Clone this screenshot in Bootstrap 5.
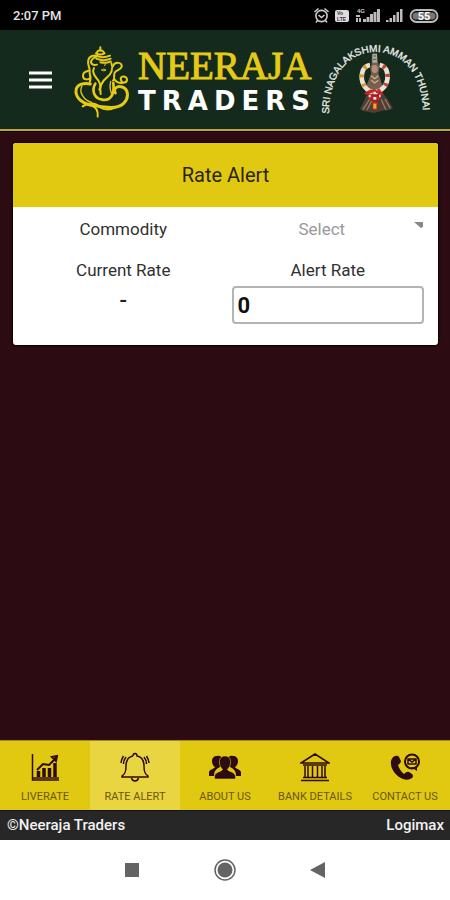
<!DOCTYPE html>
<html lang="en">
<head>
<meta charset="utf-8">
<meta name="viewport" content="width=device-width, initial-scale=1">
<title>Neeraja Traders - Rate Alert</title>
<link rel="stylesheet" href="https://cdn.jsdelivr.net/npm/bootstrap@5.3.0/dist/css/bootstrap.min.css">
<style>
body{font-family:Roboto,"Liberation Sans",sans-serif;background:#2d0b12;color:#222}
svg{display:block;flex:none}
.status-bar{height:30px;background:#000;color:#e4e4e4;font-size:13px;font-weight:500;padding:2px 11px 0 13px}
.app-header{height:101px;background:#142a1d;border-bottom:2px solid #c3a436;padding:0 17px 0 28px;box-shadow:0 1px 0 #090304;margin-bottom:12px}
.menu-btn{color:#fff;line-height:1}
.brand{gap:8px;margin-left:20px;padding-top:4px}
.brand-name{font-family:"Liberation Serif",serif;font-size:39px;line-height:38px;color:#e5ca16;-webkit-text-stroke:1px #e5ca16}
.brand-sub{font-family:"DejaVu Sans","Liberation Sans",sans-serif;font-weight:700;font-size:26px;line-height:32px;letter-spacing:6px;margin-right:-6px;color:#fff}
.crest{margin-left:auto}
.rate-card{margin:0 12px 0 13px;border:0;border-radius:3px;box-shadow:0 0 2px 1px #0c0204}
.rate-card .card-header{background:#e1c911;border:0;height:64px;font-size:20px;color:#29250c;border-radius:3px 3px 0 0}
.rate-card .card-body{padding:0 14px 21px}
.fields{column-gap:12px}
.fields>*{flex:1 1 0;min-width:0}
.field-label{font-size:17px;line-height:24px;color:#303030}
.row-first{height:43px}
.commodity{font-size:17px;line-height:24px;color:#999;appearance:none;background:none;border:0;padding:0;text-align:center;text-align-last:center;flex:1;min-width:0}
.rate-input{height:38px;border:2px solid #b4b4b4;border-radius:4px;padding:0 4px;font-size:22px;font-weight:700;color:#111}
.rate-value{font-size:22px;line-height:30px;font-weight:500}
.tabs{background:#e1c911;border-top:1px solid #a08b1c}
.tab{flex:1 1 0;min-width:0;height:69px;padding-top:11px;color:#6b5610;font-size:11px;line-height:16px;gap:7px;white-space:nowrap}
.tab svg{color:#2d0b12}
.tab.active{background:#e9d53f}
.copyright{height:30px;background:#272727;border-top:1px solid #111;color:#f2f2f2;font-size:15px;font-weight:500;padding:0 6px 0 7px}
.sys-nav{height:60px;background:#fff;gap:72px}
</style>
</head>
<body class="d-flex flex-column min-vh-100">
<div class="status-bar d-flex align-items-center justify-content-between">
  <span>2:07 PM</span>
  <svg width="126" height="18" viewBox="313 7 126 18" role="img" aria-label="Alarm, VoLTE, 4G signal, battery 55">
    <g fill="none" stroke="#ccc" stroke-width="1.6"><circle cx="321.500" cy="16" r="5.600"/><path d="M314.500 12l4-3.500M328.500 12l-4-3.500M318.500 15l3 2.500 3-2.500M317.500 20.500l-1.500 2M325.500 20.500l1.500 2"/></g>
    <rect x="335" y="10" width="14" height="12" rx="2" fill="#ddd"/>
    <g fill="#333" font-family="Liberation Sans,sans-serif" font-weight="700" font-size="5"><text x="337" y="15">Vo</text><text x="337" y="20.500">LTE</text></g>
    <text x="357" y="13" fill="#ccc" font-family="Liberation Sans,sans-serif" font-weight="700" font-size="6">4G</text>
    <path fill="#bbb" d="M356 15h4v2h-4zM356 18h2v4h-2zM359 18h2v4h-2zM363 19h3v3h-3zM366.500 17h3v5h-3zM370 14h3v8h-3zM373.500 12h3v10h-3zM377 9h3v13h-3zM386 20h2.500v2H386zM389.500 18h2.500v4h-2.500zM393 15h2.500v7H393zM396.500 12h2.500v10h-2.500zM400 9h2.500v13H400z"/>
    <rect x="410.500" y="10" width="27" height="12" rx="6" fill="#111" stroke="#bbb" stroke-width="1.800"/>
    <path fill="#777" d="M416 12.500h16a3.500 3.500 0 0 1 0 7h-16a3.500 3.500 0 0 1 0-7z"/>
    <text x="424" y="20" text-anchor="middle" fill="#fff" font-family="Roboto,sans-serif" font-weight="700" font-size="11">55</text>
  </svg>
</div>

<header class="app-header d-flex align-items-center">
  <button class="menu-btn btn p-0 border-0" type="button" aria-label="Menu">
    <svg width="26" height="20" viewBox="0 0 26 20" stroke="currentColor" stroke-width="3"><path d="M1 3h23M1 10h23M1 17h23"/></svg>
  </button>
  <div class="brand d-flex align-items-center">
    <svg width="56" height="72" viewBox="221 50 168 216" fill="none" stroke="#e5ca16" stroke-width="6" stroke-linecap="round" stroke-linejoin="round" aria-hidden="true">
      <path d="M300 54v10M292 66q8-7 16 0l5 6q-14 7-26 0z"/>
      <path d="M287 79q20 9 42 0M288 88q22 9 43 0M300 99q17 4 31-3"/>
      <path d="M290 106c-12 4-21-4-17-12 5-11 16-10 18-14-8-4-24 0-27 12-4 15 4 19 4 31-5 2-21 2-20 17 0 14 20 12 23 3M268 123c-2 13 7 24 0 35"/>
      <path d="M281 116c-9 16 7 29 14 39 7 12 5 20 2 26M333 101c7 18-1 34-13 43-16 12-24 27-19 50"/>
      <path d="M304 122q7-6 13 0-6 6-13 0M313 109l3-7" stroke-width="3"/>
      <path d="M338 111c5-15 29-13 26 1-2 9-16 9-21 18-4 8 2 16-5 24M343 151c9 13 24 11 35 7M362 152c-6-12 17-15 18-2 1 10-16 14-18 2"/>
      <path d="M270 164c-20-4-42 1-43 20-2 25 26 43 57 45 25 4 66 13 86-7 17-17 14-43-4-49-18-5-28 7-21 18" stroke-width="9"/>
      <path d="M245 170c-11 18 7 45 29 49M331 156c-3 12-4 26 6 43" stroke-width="4"/>
      <path d="M285 163c-12 21-4 43 20 48 26 5 38-15 34-50" stroke-width="8"/>
      <path d="M272 227c12 8 22 10 20 35M247 231c16-12 39-12 50 2 16 10 34 8 48 2"/>
    </svg>
    <div class="d-flex flex-column">
      <span class="brand-name">NEERAJA</span>
      <span class="brand-sub">TRADERS</span>
    </div>
  </div>
  <svg class="crest" width="114" height="76" viewBox="319 41 114 76" role="img" aria-label="Sri Nagalakshmi Amman Thunai">
    <defs><path id="arc" d="M329 113C329 73 349 51 376 51S423 73 423 115"/></defs>
    <text fill="#e9eeea" font-family="Liberation Sans,sans-serif" font-size="10" stroke="#e9eeea" stroke-width=".3"><textPath href="#arc">SRI NAGALAKSHMI AMMAN THUNAI</textPath></text>
    <g transform="translate(344 44) scale(.3333)">
      <path d="M48 192q8-16 19-39l20-14h22l18 18 20 33q-9 8-26 6l-31 8-33-6z" fill="#4e3e35"/>
      <path d="M57 194l23-36M123 162l16 28M69 195l18-35M112 164l14 31" stroke="#9a7b60" stroke-width="4"/>
      <path d="M84 28h15l4 30q7 12 0 26l13 40-10 20H76l-9-20 15-40q-6-14 1-26z" fill="#756052"/>
      <path d="M85 26h14v27H85z" fill="#aaa99c"/><path d="M88 33h8M87 43h10" stroke="#59594f" stroke-width="3"/>
      <ellipse cx="92" cy="72" rx="9" ry="12" fill="#b29078"/><path d="M81 92l11 9 11-9M82 106l10 8 11-8" fill="none" stroke="#d4b179" stroke-width="4"/>
      <path d="M65 122l21 13 10 1 21-14 3 13-12 19-8 14H82l-13-20z" fill="#a51c24"/>
      <g fill="none" stroke-width="14"><path d="M78 60C52 64 48 98 59 119q5 14 28 23M107 60c26 4 28 38 18 59q-6 14-31 23" stroke="#e9e2d8"/><path d="M78 60C52 64 48 98 59 119q5 14 28 23" stroke="#d59b24" stroke-dasharray="9 19" stroke-dashoffset="-12"/><path d="M107 60c26 4 28 38 18 59q-6 14-31 23" stroke="#c63d28" stroke-dasharray="9 19" stroke-dashoffset="-10"/></g>
      <path d="M63 147q25-18 53 2M75 162q16-12 32 1" fill="none" stroke="#c3202c" stroke-width="8"/>
      <path d="M74 153h6M88 144h8M105 153h5M88 160h9" stroke="#eee1d2" stroke-width="8"/>
      <path d="M84 171h17l-2 23H87z" fill="#c72b22"/><path d="M88 176h9v15h-9z" fill="#e2b326"/>
    </g>
  </svg>
</header>

<main class="flex-grow-1">
  <form class="rate-card card">
    <h1 class="card-header d-flex align-items-center justify-content-center fw-normal m-0">Rate Alert</h1>
    <div class="card-body">
      <div class="fields row-first d-flex align-items-center">
        <label class="field-label text-center" for="commodity">Commodity</label>
        <div class="d-flex">
          <select id="commodity" class="commodity"><option>Select</option></select>
          <svg class="mt-1" width="12" height="12" viewBox="0 0 12 12" fill="#888" aria-hidden="true"><path d="M2 1h9v5l-2 1z"/></svg>
        </div>
      </div>
      <div class="fields d-flex">
        <div class="text-center pt-2">
          <div class="field-label">Current Rate</div>
          <output class="rate-value d-block pt-1">-</output>
        </div>
        <div class="text-center pt-2">
          <label class="field-label d-block" for="alertRate">Alert Rate</label>
          <input id="alertRate" class="rate-input w-100 mt-1" type="text" inputmode="decimal" value="0">
        </div>
      </div>
    </div>
  </form>
</main>

<nav class="tabs d-flex" aria-label="Sections">
  <a class="tab d-flex flex-column align-items-center text-decoration-none" href="#liverate">
    <svg width="30" height="30" viewBox="0 0 30 30" fill="none" stroke="currentColor" stroke-width="1.500"><path d="M2.500 2v26H29M2 26h27"/><path d="M7 18l6-6 6 1 7-7M22 5l5-1-1 5z" stroke-width="2"/><path d="M8.500 25v-6M14 25V16M19.500 25v-9M25 25V11" stroke-width="3.500"/></svg>
    <span>LIVERATE</span></a>
  <a class="tab active d-flex flex-column align-items-center text-decoration-none" href="#ratealert" aria-current="page">
    <svg width="30" height="30" viewBox="0 0 30 30" fill="none" stroke="currentColor" stroke-width="1.500"><path d="M13 4q0-2.500 2-2.500T17 4c5 1 7 5 7 10 0 6 1 8 4 10v1H2v-1c3-2 4-4 4-10 0-5 2-9 7-10M11.500 26c1 4 6 4 7 0"/><path d="M6 5Q3.500 8 3.500 12M3.500 4Q1 8 1 11M24 5q2.500 3 2.500 7M26.500 4Q29 8 29 11"/></svg>
    <span>RATE ALERT</span></a>
  <a class="tab d-flex flex-column align-items-center text-decoration-none" href="#about">
    <svg width="34" height="30" viewBox="0 0 34 30" fill="currentColor"><path d="M9 4c4-1 6 2 5 6-1 2-1 4-2 5-4 2-6 4-6 9H1v-4c1-3 5-3 6-5-2-1-3-4-3-6 0-3 2-5 5-5zM25 4c-4-1-6 2-5 6 1 2 1 4 2 5 4 2 6 4 6 9h5v-4c-1-3-5-3-6-5 2-1 3-4 3-6 0-3-2-5-5-5z"/><path d="M17 4c4 0 6 3 5.500 7-.5 3-1 5-3 6 0 3 7 2 8 7v3h-21v-3c1-5 8-4 8-7-2-1-2.500-3-3-6C11 7 13 4 17 4z" stroke="#e1c911" stroke-width=".6"/></svg>
    <span>ABOUT US</span></a>
  <a class="tab d-flex flex-column align-items-center text-decoration-none" href="#bank">
    <svg width="30" height="30" viewBox="0 0 30 30" fill="none" stroke="currentColor" stroke-width="1.500"><path d="M1 11L15 2l14 9zM3 13h24M3 25.500h24M1 28.500h28"/><path d="M5 14v11M8 14v11M12.500 14v11M17.500 14v11M22 14v11M25 14v11"/></svg>
    <span>BANK DETAILS</span></a>
  <a class="tab d-flex flex-column align-items-center text-decoration-none" href="#contact">
    <svg width="30" height="30" viewBox="0 0 30 30" fill="currentColor"><path d="M5 4q3-1 4 1l2 4q0 2-3 4 2 6 6 9 3-3 5-2l3 2q2 2 0 4-4 3-9 1C5 24 0 16 1 9q1-4 4-5z"/><g fill="none" stroke="currentColor"><circle cx="22" cy="9.500" r="7" stroke-width="2"/><path d="M18 7h8v5h-8zl4 3 4-3" stroke-width="1.500"/></g><path d="M21 15h6v4z"/></svg>
    <span>CONTACT US</span></a>
</nav>
<footer class="copyright d-flex align-items-center justify-content-between"><span>©Neeraja Traders</span><span>Logimax</span></footer>
<div class="sys-nav d-flex align-items-center justify-content-center">
  <button class="btn p-0 border-0" type="button" aria-label="Recent apps"><svg width="18" height="18" viewBox="0 0 18 18"><path fill="#646464" d="M2 2h14v14H2z"/></svg></button>
  <button class="btn p-0 border-0" type="button" aria-label="Home"><svg width="24" height="24" viewBox="0 0 24 24"><circle cx="12" cy="12" r="10" fill="none" stroke="#646464" stroke-width="1.500"/><circle cx="12" cy="12" r="7.500" fill="#646464"/></svg></button>
  <button class="btn p-0 border-0" type="button" aria-label="Back"><svg width="18" height="18" viewBox="0 0 18 18"><path fill="#646464" d="M16 1v16L1 9z"/></svg></button>
</div>
<script src="https://cdn.jsdelivr.net/npm/bootstrap@5.3.0/dist/js/bootstrap.bundle.min.js"></script>
</body>
</html>
